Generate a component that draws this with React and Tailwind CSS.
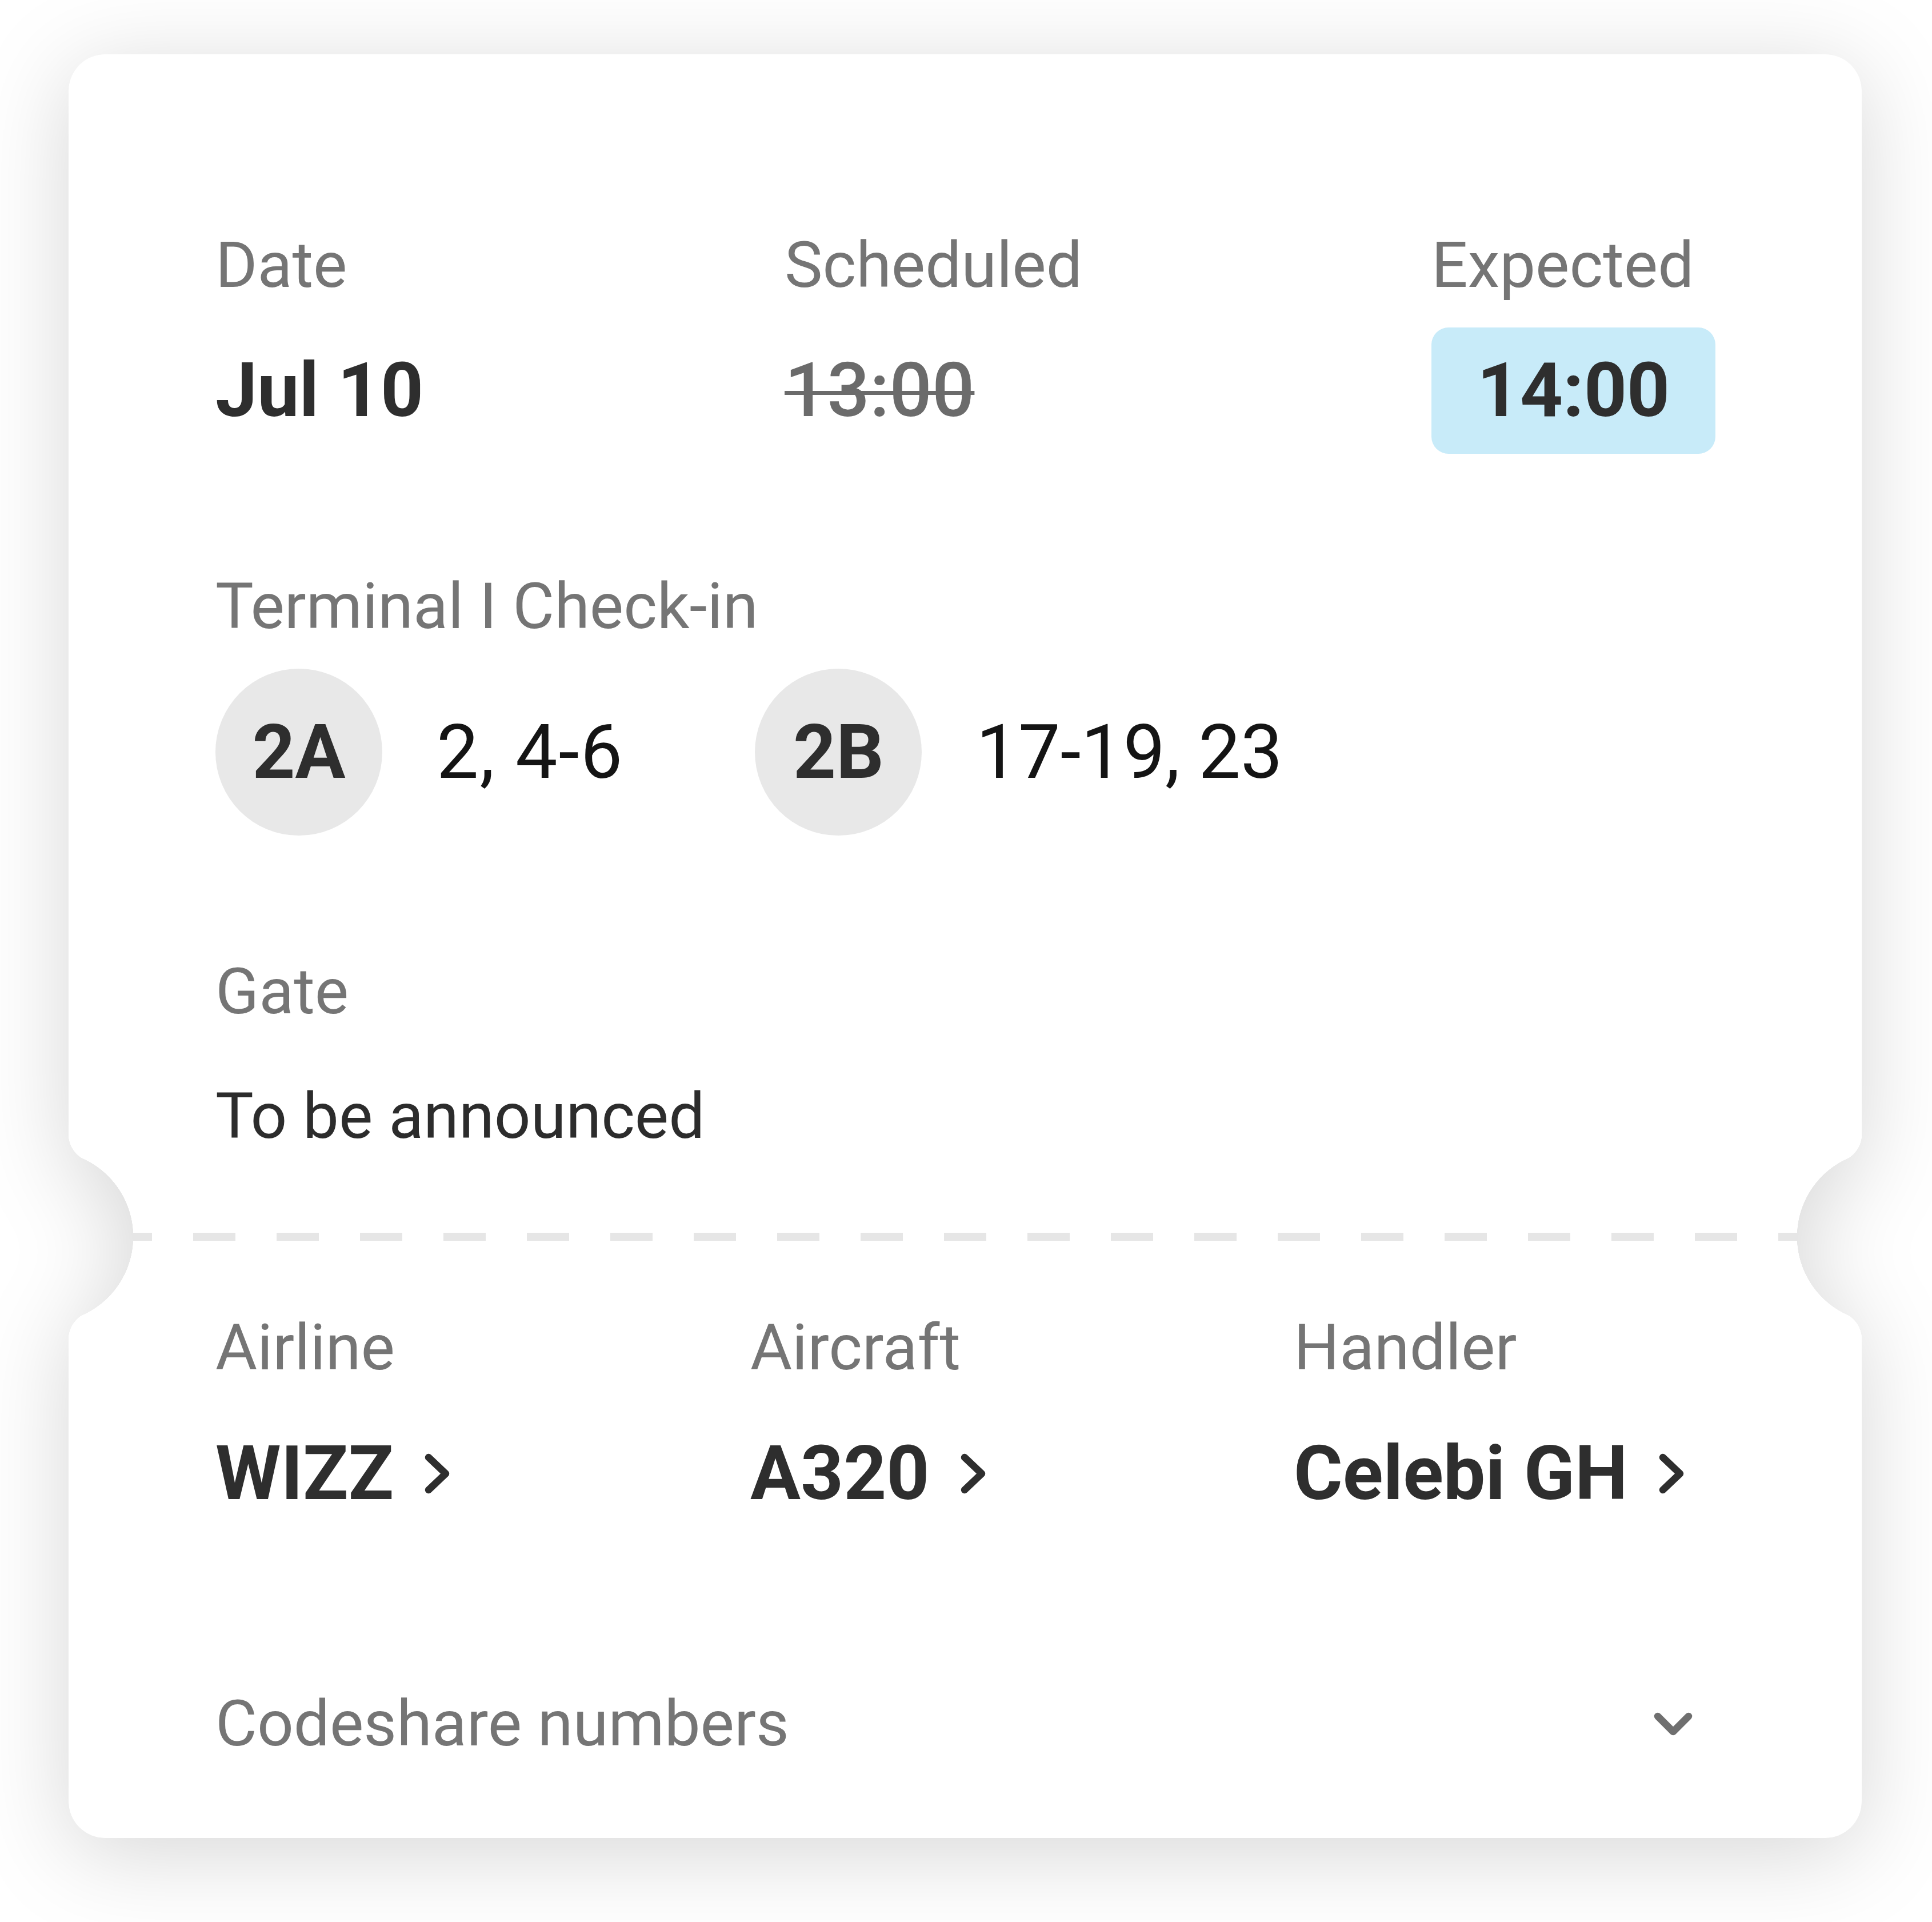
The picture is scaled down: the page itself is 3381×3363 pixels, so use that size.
export default function App() {
  const label = "text-[112px] leading-[112px] text-[#757575]";
  const value = "text-[131px] leading-[131px] font-bold text-[#2e2e2e]";

  const Chevron = () => (
    <svg width="44" height="71" viewBox="0 0 44 71" className="ml-[54px] shrink-0">
      <polyline
        points="7,7 37,35.5 7,64"
        fill="none"
        stroke="#2e2e2e"
        strokeWidth="12.5"
        strokeLinecap="round"
        strokeLinejoin="round"
      />
    </svg>
  );

  return (
    <div className="min-h-[3363px] w-[3381px] bg-white pt-[95px] pl-[120px] [font-family:Roboto,'Liberation_Sans',sans-serif]">
      <div className="w-[3138px] [filter:drop-shadow(0_26px_80px_rgba(0,0,0,0.16))]">
        <div className="rounded-[64px] bg-white pt-[313px] pb-[144px] [mask-image:radial-gradient(circle_at_calc(100%_+_37px)_2069px,transparent_150px,#000_150.5px),radial-gradient(circle_at_-37px_2069px,transparent_150px,#000_150.5px),linear-gradient(#000,#000),radial-gradient(circle_at_50px_0px,transparent_50px,#000_50.5px),radial-gradient(circle_at_50px_45px,transparent_50px,#000_50.5px),radial-gradient(circle_at_-21px_0px,transparent_50px,#000_50.5px),radial-gradient(circle_at_-21px_45px,transparent_50px,#000_50.5px)] [mask-position:0_0,0_0,0_0,0_1889px,0_2204px,100%_1889px,100%_2204px] [mask-size:100%_100%,100%_100%,100%_100%,29px_45px,29px_45px,29px_45px,29px_45px] [mask-repeat:no-repeat] [mask-composite:intersect,intersect,subtract,add,add,add,add]">
          {/* Top section */}
          <div className="px-[257px]">
            <div className="grid grid-cols-[996px_1132px_1fr]">
              <div>
                <div className={label}>Date</div>
                <div className="mt-[53px] flex h-[221px] items-center">
                  <span className={value}>Jul 10</span>
                </div>
              </div>
              <div>
                <div className={label}>Scheduled</div>
                <div className="mt-[53px] flex h-[221px] items-center">
                  <span className="text-[131px] leading-[131px] font-medium text-[#6b6b6b] line-through decoration-[7px]">
                    13:00
                  </span>
                </div>
              </div>
              <div>
                <div className={label}>Expected</div>
                <div className="mt-[53px] flex h-[221px] w-[497px] items-center justify-center rounded-[30px] bg-[#c8ebf9]">
                  <span className={value}>14:00</span>
                </div>
              </div>
            </div>

            <div className="mt-[211px]">
              <div className={label}>Terminal I Check-in</div>
              <div className="mt-[53px] flex items-center">
                <div className="flex h-[292px] w-[292px] items-center justify-center rounded-full bg-[#e8e8e8]">
                  <span className={value}>2A</span>
                </div>
                <span className="ml-[95px] text-[131px] leading-[131px] tracking-[2px] text-[#141414]">2, 4-6</span>
                <div className="ml-[230px] flex h-[292px] w-[292px] items-center justify-center rounded-full bg-[#e8e8e8]">
                  <span className={value}>2B</span>
                </div>
                <span className="ml-[95px] text-[131px] leading-[131px] text-[#141414]">17-19, 23</span>
              </div>
            </div>

            <div className="mt-[217px]">
              <div className={label}>Gate</div>
              <div className="mt-[106px] text-[112px] leading-[112px] text-[#2c2c2c]">To be announced</div>
            </div>
          </div>

          {/* Perforation */}
          <div className="mt-[148px] h-[14px] w-full [background-image:repeating-linear-gradient(90deg,transparent_0_72px,#e6e6e6_72px_146px)]" />

          {/* Bottom section */}
          <div className="px-[257px]">
            <div className="mt-[131px] grid grid-cols-[936px_951px_1fr]">
              <div>
                <div className={label}>Airline</div>
                <div className="mt-[99px] flex items-center">
                  <span className={value}>WIZZ</span>
                  <Chevron />
                </div>
              </div>
              <div>
                <div className={label}>Aircraft</div>
                <div className="mt-[99px] flex items-center">
                  <span className={value}>A320</span>
                  <Chevron />
                </div>
              </div>
              <div>
                <div className={label}>Handler</div>
                <div className="mt-[99px] flex items-center">
                  <span className={value}>Celebi GH</span>
                  <Chevron />
                </div>
              </div>
            </div>

            <div className="mt-[316px] flex items-center justify-between">
              <div className={label}>Codeshare numbers</div>
              <svg width="68" height="41" viewBox="0 0 68 41" className="mr-[39px] shrink-0">
                <polyline
                  points="7,7 34,34 61,7"
                  fill="none"
                  stroke="#6f6f6f"
                  strokeWidth="12.5"
                  strokeLinecap="round"
                  strokeLinejoin="round"
                />
              </svg>
            </div>
          </div>
        </div>
      </div>
    </div>
  );
}
